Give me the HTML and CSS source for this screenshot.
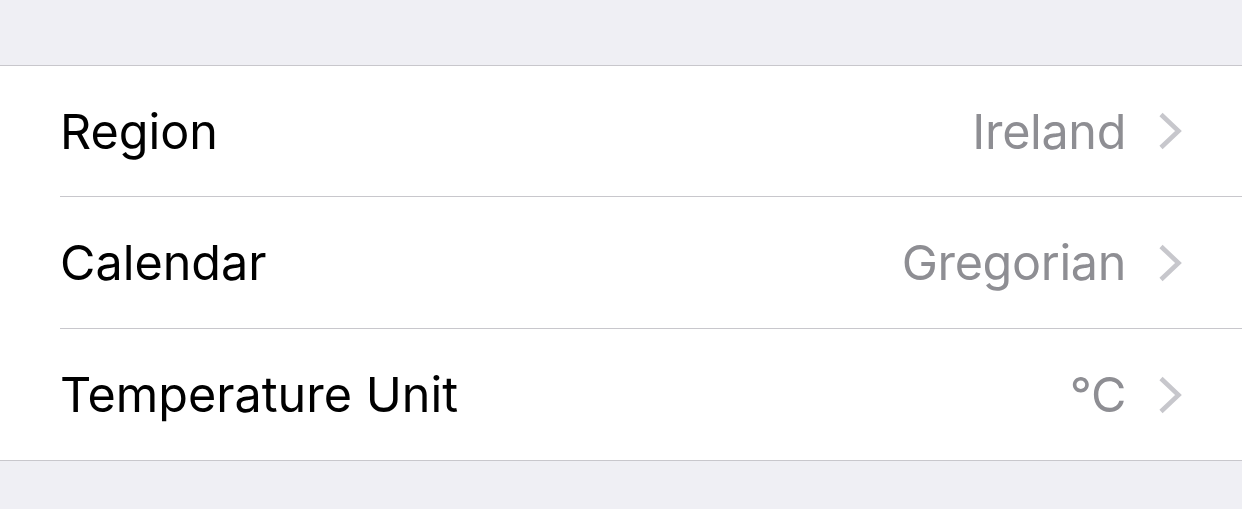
FILE: index.html
```html
<!DOCTYPE html>
<html>
<head>
<meta charset="utf-8">
<link rel="stylesheet" href="styles.css">
</head>
<body>
<div class="spacer"></div>
<div class="group">
  <div class="row">
    <div class="cell">
      <span class="label">Region</span>
      <span class="value">Ireland</span>
      <svg class="chev" viewBox="0 0 24 38" width="24" height="38"><path d="M3 2.5 L20.5 19 L3 35.5" fill="none" stroke="#c7c7cc" stroke-width="4.6" stroke-linecap="butt" stroke-linejoin="miter"/></svg>
    </div>
  </div>
  <div class="row">
    <div class="cell">
      <span class="label">Calendar</span>
      <span class="value">Gregorian</span>
      <svg class="chev" viewBox="0 0 24 38" width="24" height="38"><path d="M3 2.5 L20.5 19 L3 35.5" fill="none" stroke="#c7c7cc" stroke-width="4.6" stroke-linecap="butt" stroke-linejoin="miter"/></svg>
    </div>
  </div>
  <div class="row">
    <div class="cell">
      <span class="label">Temperature Unit</span>
      <span class="value">°C</span>
      <svg class="chev" viewBox="0 0 24 38" width="24" height="38"><path d="M3 2.5 L20.5 19 L3 35.5" fill="none" stroke="#c7c7cc" stroke-width="4.6" stroke-linecap="butt" stroke-linejoin="miter"/></svg>
    </div>
  </div>
</div>
</body>
</html>
```

FILE: styles.css
```css
html, body {
  margin: 0;
  padding: 0;
  background: #efeff4;
  height: 100%;
  font-family: Inter, "Noto Sans", sans-serif;
}
.spacer {
  height: 65px;
}
.group {
  background: #ffffff;
  border-top: 1px solid #c8c7cc;
  border-bottom: 1px solid #c8c7cc;
  padding-left: 60px;
}
.row + .row .cell {
  border-top: 1px solid #c8c7cc;
  height: 131px;
}
.cell {
  height: 130px;
  display: flex;
  align-items: center;
  padding-right: 60px;
}
.label {
  flex: 1;
  font-size: 48.5px;
  color: #000000;
  padding-left: 0;
}
.value {
  font-size: 48.5px;
  color: #8e8e93;
  margin-right: 32px;
  letter-spacing: -0.35px;
}
.chev {
  display: block;
}
```
